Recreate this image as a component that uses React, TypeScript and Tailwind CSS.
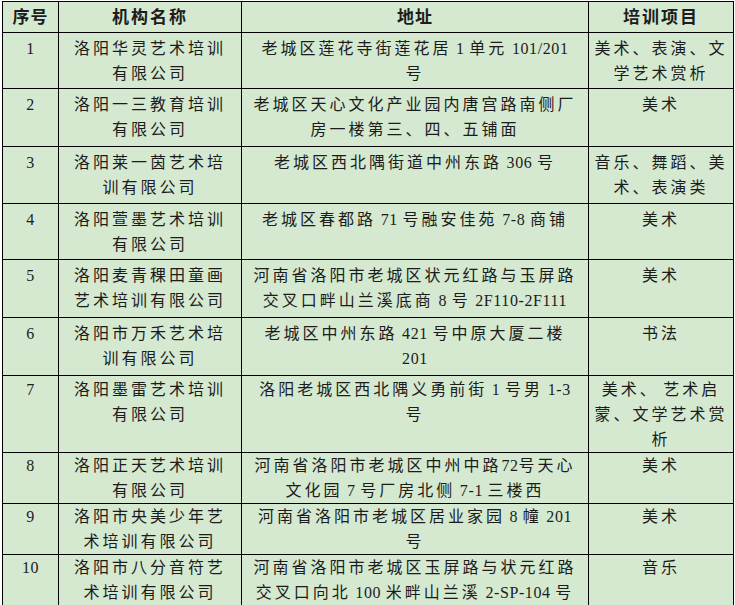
import React from 'react';

type Row = {
  no: string;
  name: string[];
  addr: string[];
  item: string[];
  h: string;
  pt: string;
};

const rows: Row[] = [
  { no: '1', name: ['洛阳华灵艺术培训', '有限公司'], addr: ['老城区莲花寺街莲花居 1 单元 101/201', '号'], item: ['美术、表演、文', '学艺术赏析'], h: 'h-[56px]', pt: 'pt-[3px]' },
  { no: '2', name: ['洛阳一三教育培训', '有限公司'], addr: ['老城区天心文化产业园内唐宫路南侧厂', '房一楼第三、四、五铺面'], item: ['美术'], h: 'h-[58px]', pt: 'pt-[3px]' },
  { no: '3', name: ['洛阳莱一茵艺术培', '训有限公司'], addr: ['老城区西北隅街道中州东路 306 号'], item: ['音乐、舞蹈、美', '术、表演类'], h: 'h-[57px]', pt: 'pt-[3px]' },
  { no: '4', name: ['洛阳萱墨艺术培训', '有限公司'], addr: ['老城区春都路 71 号融安佳苑 7-8 商铺'], item: ['美术'], h: 'h-[56px]', pt: 'pt-[3px]' },
  { no: '5', name: ['洛阳麦青稞田童画', '艺术培训有限公司'], addr: ['河南省洛阳市老城区状元红路与玉屏路', '交叉口畔山兰溪底商 8 号 2F110-2F111'], item: ['美术'], h: 'h-[58px]', pt: 'pt-[3px]' },
  { no: '6', name: ['洛阳市万禾艺术培', '训有限公司'], addr: ['老城区中州东路 421 号中原大厦二楼', '201'], item: ['书法'], h: 'h-[58px]', pt: 'pt-[3px]' },
  { no: '7', name: ['洛阳墨雷艺术培训', '有限公司'], addr: ['洛阳老城区西北隅义勇前街 1 号男 1-3', '号'], item: ['美术、 艺术启', '蒙、文学艺术赏', '析'], h: 'h-[76px]', pt: 'pt-[1px]' },
  { no: '8', name: ['洛阳正天艺术培训', '有限公司'], addr: ['河南省洛阳市老城区中州中路72号天心', '文化园 7 号厂房北侧 7-1 三楼西'], item: ['美术'], h: 'h-[51px]', pt: 'pt-0' },
  { no: '9', name: ['洛阳市央美少年艺', '术培训有限公司'], addr: ['河南省洛阳市老城区居业家园 8 幢 201', '号'], item: ['美术'], h: 'h-[51px]', pt: 'pt-0' },
  { no: '10', name: ['洛阳市八分音符艺', '术培训有限公司'], addr: ['河南省洛阳市老城区玉屏路与状元红路', '交叉口向北 100 米畔山兰溪 2-SP-104 号'], item: ['音乐'], h: 'h-[51px]', pt: 'pt-0' },
];

// split a line into CJK runs and latin/digit runs, spaced differently
function Line({ text }: { text: string }) {
  const parts = text.match(/[\x00-\x7f]+|[^\x00-\x7f]+/g) || [];
  return (
    <div className="whitespace-nowrap leading-[25px]">
      {parts.map((p, i) =>
        /^[\x00-\x7f]+$/.test(p) ? (
          <span key={i} className="tracking-[0.6px]">{p}</span>
        ) : (
          <span key={i} className="tracking-[3px]">{p}</span>
        )
      )}
    </div>
  );
}

const cell = 'border border-black align-top text-center px-0 pb-0';

export default function App() {
  return (
    <div
      className="w-[735px] h-[605px] bg-white pt-[1px] pl-[2px] text-[16px] text-[#1c1c1c]"
      style={{ fontFamily: '"Liberation Serif", "Noto Sans CJK SC", serif' }}
    >
      <table className="table-fixed border-collapse bg-[#d5e9d1] w-[731px]">
        <colgroup>
          <col className="w-[56px]" />
          <col className="w-[183px]" />
          <col className="w-[347px]" />
          <col className="w-[145px]" />
        </colgroup>
        <thead>
          <tr className="h-[31px]">
            <th className="border border-black text-[17px] font-bold tracking-[1px] align-middle leading-[29px]">序号</th>
            <th className="border border-black text-[17px] font-bold tracking-[2px] align-middle leading-[29px]">机构名称</th>
            <th className="border border-black text-[17px] font-bold tracking-[1px] align-middle leading-[29px]">地址</th>
            <th className="border border-black text-[17px] font-bold tracking-[2px] align-middle leading-[29px]">培训项目</th>
          </tr>
        </thead>
        <tbody>
          {rows.map((r) => (
            <tr key={r.no} className={r.h}>
              <td className={`${cell} ${r.pt}`}>
                <Line text={r.no} />
              </td>
              <td className={`${cell} ${r.pt}`}>
                {r.name.map((l, i) => <Line key={i} text={l} />)}
              </td>
              <td className={`${cell} ${r.pt}`}>
                {r.addr.map((l, i) => <Line key={i} text={l} />)}
              </td>
              <td className={`${cell} ${r.pt}`}>
                {r.item.map((l, i) => <Line key={i} text={l} />)}
              </td>
            </tr>
          ))}
        </tbody>
      </table>
    </div>
  );
}
